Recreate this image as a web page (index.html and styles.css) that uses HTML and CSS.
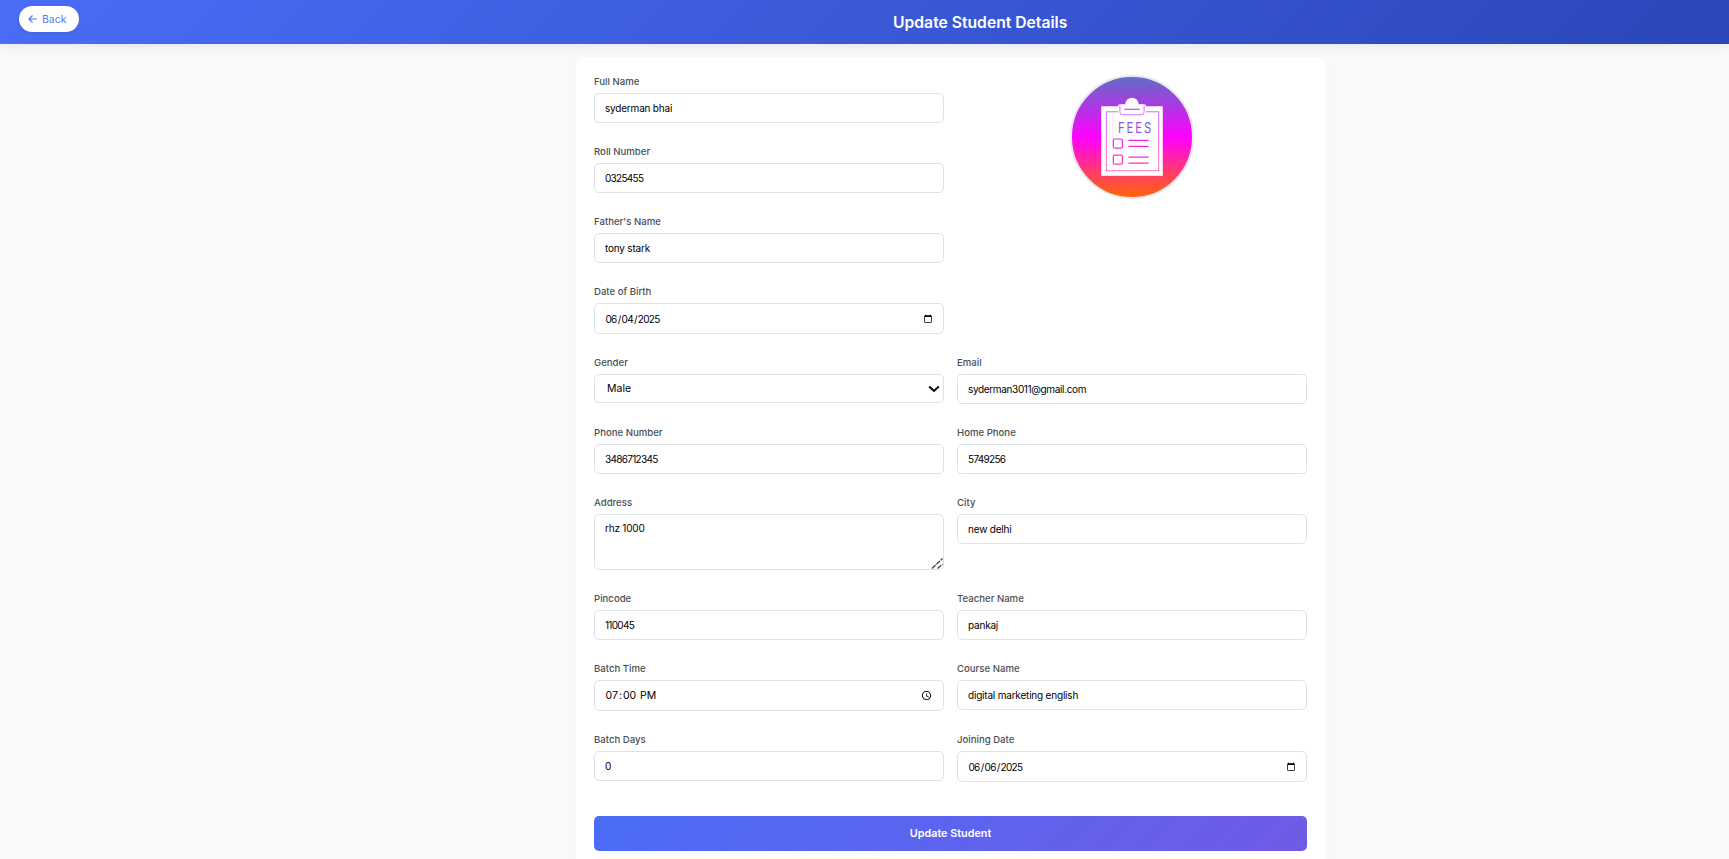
FILE: index.html
```html
<!DOCTYPE html>
<html lang="en">
<head>
<meta charset="utf-8">
<title>Update Student Details</title>
<link rel="stylesheet" href="styles.css">
</head>
<body>
<header class="topbar">
  <button class="back" type="button">
    <svg class="back-icon" viewBox="0 0 10 10" width="10" height="10"><path d="M9 5H1M4.500 1.500 1 5l3.500 3.500" fill="none" stroke="currentColor" stroke-width="1.200"/></svg>
    Back
  </button>
  <h1 class="title">Update Student Details</h1>
</header>
<main class="page">
  <form class="card">
    <div class="grid">
      <div class="col-left">
        <div class="field"><label>Full Name</label><input class="ctl" type="text" value="syderman bhai"></div>
        <div class="field"><label>Roll Number</label><input class="ctl num" type="text" value="0325455"></div>
        <div class="field"><label>Father's Name</label><input class="ctl" type="text" value="tony stark"></div>
        <div class="field"><label>Date of Birth</label><input class="ctl tall num" type="date" value="2025-06-04"></div>
      </div>
      <div class="photo-col">
        <svg class="photo" viewBox="0 0 123 123" width="124" height="124">
          <defs>
            <linearGradient id="bg" x1="0" y1="0" x2="0" y2="1">
              <stop offset="0" stop-color="#5d6fc6"/>
              <stop offset="0.5" stop-color="#ff00ff"/>
              <stop offset="1" stop-color="#ff6600"/>
            </linearGradient>
            <linearGradient id="ink" gradientUnits="userSpaceOnUse" x1="0" y1="0" x2="0" y2="123">
              <stop offset="0" stop-color="#8a55e0"/>
              <stop offset="0.5" stop-color="#f51cf5"/>
              <stop offset="1" stop-color="#ff5a50"/>
            </linearGradient>
          </defs>
          <circle cx="61.500" cy="61.500" r="60.500" fill="url(#bg)" stroke="#e5e7eb" stroke-width="2"/>
          <rect x="31" y="31" width="61" height="69" fill="#fff"/>
          <rect x="36" y="36.500" width="52" height="58.500" fill="none" stroke="url(#ink)" stroke-width="0.900" opacity="0.8"/>
          <path d="M47.500 39V31a2 2 0 0 1 2-2h5.500a6.500 6.500 0 0 1 13 0H73.500a2 2 0 0 1 2 2v8a3 3 0 0 1-3 3H50.500a3 3 0 0 1-3-3z" fill="#fff"/>
          <path d="M49.500 30v7a2.500 2.500 0 0 0 2.500 2.500H71a2.500 2.500 0 0 0 2.500-2.500v-7" fill="none" stroke="url(#ink)" stroke-width="0.900" opacity="0.8"/>
          <path d="M54 34h15" stroke="url(#ink)" stroke-width="1.100"/>
          <text class="fees" transform="translate(47.500 57.300) scale(0.750 1)" fill="url(#ink)">FEES</text>
          <rect x="43" y="63.500" width="9" height="9" rx="1.500" fill="none" stroke="url(#ink)" stroke-width="1.200"/>
          <rect x="43" y="79.500" width="9" height="9" rx="1.500" fill="none" stroke="url(#ink)" stroke-width="1.200"/>
          <path d="M58 64.800h20M58 70.800h20M58 81.400h20M58 87.400h20" stroke="url(#ink)" stroke-width="1.200"/>
        </svg>
      </div>
      <div class="field"><label>Gender</label>
        <select class="ctl sel"><option>Male</option><option>Female</option></select>
      </div>
      <div class="field"><label>Email</label><input class="ctl mail" type="email" value="syderman3011@gmail.com"></div>
      <div class="field"><label>Phone Number</label><input class="ctl num" type="text" value="3486712345"></div>
      <div class="field"><label>Home Phone</label><input class="ctl num" type="text" value="5749256"></div>
      <div class="field"><label>Address</label><textarea class="ctl area">rhz 1000</textarea></div>
      <div class="field"><label>City</label><input class="ctl" type="text" value="new delhi"></div>
      <div class="field"><label>Pincode</label><input class="ctl num" type="text" value="110045"></div>
      <div class="field"><label>Teacher Name</label><input class="ctl" type="text" value="pankaj"></div>
      <div class="field"><label>Batch Time</label><input class="ctl tall time" type="time" value="19:00"></div>
      <div class="field"><label>Course Name</label><input class="ctl" type="text" value="digital marketing english"></div>
      <div class="field"><label>Batch Days</label><input class="ctl num" type="text" value="0"></div>
      <div class="field"><label>Joining Date</label><input class="ctl tall num" type="date" value="2025-06-06"></div>
    </div>
    <button class="submit" type="button">Update Student</button>
  </form>
</main>
</body>
</html>
```
FILE: styles.css
```css
* { box-sizing: border-box; }
html, body { height: 100%; overflow: hidden; }
body {
  margin: 0;
  background: #f8f9fa;
  font-family: Inter, "Open Sans", sans-serif;
  color: #000;
}
.topbar {
  height: 44px;
  display: flex;
  align-items: center;
  padding: 0 19px;
  background: linear-gradient(135deg, #4a6cf7 0%, #2a46b8 100%);
  box-shadow: 0 2px 10px rgba(0, 0, 0, 0.08);
}
.back {
  width: 60px;
  height: 26px;
  margin-top: -6px;
  display: flex;
  align-items: center;
  gap: 4px;
  padding: 0 0 0 9px;
  border: 0;
  border-radius: 13px;
  background: #fff;
  color: #5a78f5;
  font: 400 10.500px Inter, sans-serif;
  box-shadow: 0 1px 3px rgba(0, 0, 0, 0.1);
}
.title {
  margin: 0 0 0 814px;
  color: #fff;
  font-size: 15.700px;
  font-weight: 600;
}
.page {
  display: flex;
  justify-content: center;
  padding: 13px 0 0 173px;
}
.card {
  width: 750px;
  padding: 18px 19px 24px 18px;
  background: #fff;
  border-radius: 8px;
  box-shadow: 0 2px 8px rgba(0, 0, 0, 0.02);
}
.grid {
  display: grid;
  grid-template-columns: 350px 350px;
  column-gap: 13px;
}
.col-left { display: flex; flex-direction: column; }
.photo-col { display: flex; justify-content: center; }
.photo { display: block; margin-left: -1px; }
.fees { font: 400 15px Inter, sans-serif; letter-spacing: 2.500px; }
.field { margin-bottom: 22px; display: flex; flex-direction: column; }
label {
  height: 18px;
  padding-top: 1px;
  font-size: 9.600px;
  font-weight: 500;
  line-height: 12px;
  color: #495057;
}
.ctl {
  display: block;
  width: 100%;
  height: 30px;
  padding: 0 10px;
  border: 1px solid #dee2e6;
  border-radius: 5px;
  background: #fff;
  color: #000;
  font: 400 10px Inter, sans-serif;
  letter-spacing: -0.200px;
  outline: 0;
}
.mail { letter-spacing: -0.350px; }
.num { letter-spacing: -0.700px; }
.tall { height: 31px; padding: 0 8px 0 9.500px; }
.time { font-size: 10.500px; letter-spacing: 0; }
.sel {
  height: 29px;
  margin-bottom: 1px;
  padding: 0 24px 0 12px;
  font-size: 10.500px;
  letter-spacing: 0;
  appearance: none;
  background: #fff url("data:image/svg+xml,%3Csvg xmlns='http://www.w3.org/2000/svg' width='12' height='8' viewBox='0 0 12 8'%3E%3Cpath d='M1.200 1.500 6 6l4.800-4.500' fill='none' stroke='%23000' stroke-width='2'/%3E%3C/svg%3E") no-repeat right 3px center;
}
.area { height: 56px; padding: 7px 10px; resize: vertical; }
.area::-webkit-resizer {
  background: url("data:image/svg+xml,%3Csvg xmlns='http://www.w3.org/2000/svg' width='15' height='15' viewBox='0 0 15 15'%3E%3Cpath d='M4 14.500 14.500 4.500M9.500 14.500l5-4.500' fill='none' stroke='%23444' stroke-width='1.300' stroke-dasharray='5 1'/%3E%3C/svg%3E") no-repeat;
}
.submit {
  display: block;
  width: 100%;
  height: 35px;
  margin-top: 12px;
  border: 0;
  border-radius: 5px;
  background: linear-gradient(135deg, #4a6cf7 0%, #6f5be6 100%);
  color: #fff;
  font: 600 10.800px Inter, sans-serif;
}
```
